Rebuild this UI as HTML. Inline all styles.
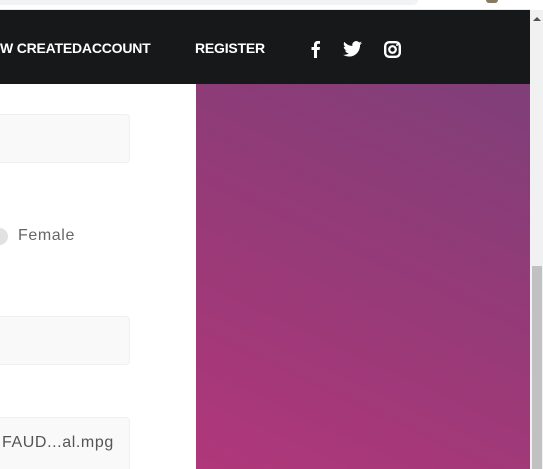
<html style="overflow:hidden"><head><style>
html,body{margin:0;width:543px;height:469px;overflow:hidden}
body{background:#fff;position:relative;font-family:"Liberation Sans",sans-serif}
.top{position:absolute;left:0;top:0;width:530px;height:10px;background:#fff;border-bottom:1px solid #e6e6e6;box-sizing:border-box}
.tb{position:absolute;left:0;top:0;width:418px;height:5px;background:#f1f3f4;border-radius:0 0 8px 0}
.av{position:absolute;left:486px;top:0;width:12px;height:3px;background:#8a7a5a;border-radius:0 0 6px 6px}
nav{position:absolute;left:0;top:10px;width:530px;height:74px;background:#17181a;color:#fff;font-weight:bold;font-size:14px;letter-spacing:-0.2px}
nav span{position:absolute;top:30px}
.sb{position:absolute;left:530px;top:10px;width:13px;height:459px;background:#f1f1f1}
.th{position:absolute;left:532px;top:266px;width:10px;height:203px;background:#c1c1c1}
.ar{position:absolute;left:533px;top:17px;width:0;height:0;border-left:4px solid transparent;border-right:4px solid transparent;border-bottom:4px solid #505050}
.pp{position:absolute;left:196px;top:84px;width:334px;height:385px;background:linear-gradient(25deg,#b0377a 0%,#973a78 50%,#7f3f79 100%)}
.in{position:absolute;left:-10px;width:140px;height:49px;background:#f9f9f9;border:1px solid #f0f0f0;border-radius:4px;box-sizing:border-box}
.t{position:absolute;color:#666;font-size:16px;letter-spacing:0.6px}
</style></head><body>
<div class="top"><div class="tb"></div><div class="av"></div></div>
<nav><span style="left:0">W CREATEDACCOUNT</span><span style="left:195px">REGISTER</span>
<svg style="position:absolute;left:309px;top:30px" width="12" height="18" viewBox="0 0 12 18"><path d="M8 18V10h2.6l.4-3H8V5.2c0-.9.3-1.5 1.5-1.5H11V1.1C10.7 1 9.8 1 8.8 1 6.6 1 5 2.3 5 4.8V7H2.5v3H5v8z" fill="#fff"/></svg>
<svg style="position:absolute;left:343px;top:31px" width="19" height="16" viewBox="0 0 24 20"><path d="M24 2.4c-.9.4-1.8.7-2.8.8 1-.6 1.8-1.6 2.2-2.7-1 .6-2 1-3.1 1.2A4.9 4.9 0 0 0 11.9 6.2 14 14 0 0 1 1.7 1 4.9 4.9 0 0 0 3.2 7.6c-.8 0-1.600-.3-2.2-.6 0 2.4 1.7 4.4 3.9 4.8-.7.2-1.5.2-2.2.1.6 2 2.4 3.4 4.6 3.4A9.9 9.9 0 0 1 0 17.3 14 14 0 0 0 7.5 19.5c9.1 0 14-7.5 14-14v-.6c1-.7 1.8-1.6 2.5-2.500z" fill="#fff"/></svg>
<svg style="position:absolute;left:384px;top:31px" width="17" height="17" viewBox="0 0 17 17"><rect x="1.2" y="1.2" width="14.6" height="14.6" rx="4" fill="none" stroke="#fff" stroke-width="2.4"/><circle cx="8.5" cy="8.5" r="3.3" fill="none" stroke="#fff" stroke-width="2.2"/><circle cx="13" cy="4" r="1" fill="#fff"/></svg>
</nav>
<div class="pp"></div>
<div class="sb"></div><div class="th"></div><div class="ar"></div>
<div class="in" style="top:114px"></div>
<div style="position:absolute;left:-9px;top:228px;width:17px;height:17px;border-radius:50%;background:#e2e2e2"></div>
<div class="t" style="left:18px;top:227px">Female</div>
<div class="in" style="top:316px"></div>
<div class="in" style="top:417px;height:52px;border-bottom:none;border-radius:4px 4px 0 0"></div>
<div class="t" style="left:2px;top:434px;color:#555">FAUD...al.mpg</div>
</body></html>
